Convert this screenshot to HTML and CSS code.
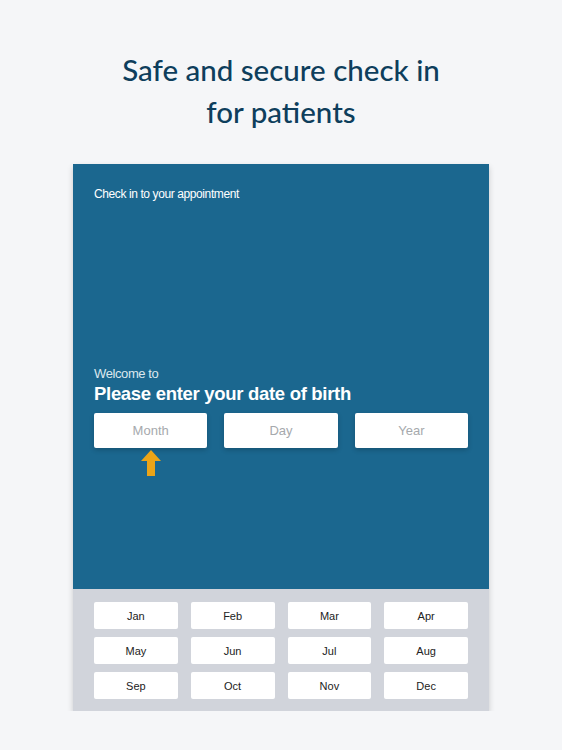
FILE: index.html
```html
<!DOCTYPE html>
<html lang="en">
<head>
  <meta charset="UTF-8" />
  <meta name="viewport" content="width=device-width, initial-scale=1.0" />
  <title>Safe and secure check in</title>
  <link rel="stylesheet" href="styles.css">
</head>
<body>
  <header class="hero">
    <h1>Safe and secure check in<br>for patients</h1>
  </header>

  <div class="device">
    <!-- Check in screen -->
    <div class="screen">
      <p class="screen-title">Check in to your appointment</p>

      <div class="dob">
        <p class="welcome">Welcome to</p>
        <h2>Please enter your date of birth</h2>
        <div class="fields">
          <div class="field">Month</div>
          <div class="field">Day</div>
          <div class="field">Year</div>
        </div>
        <div class="fields">
          <div class="pointer">
            <svg width="20" height="26" viewBox="0 0 20 26">
              <path d="M10 0 L20 11 L14 11 L14 26 L6 26 L6 11 L0 11 Z" fill="#eba417" />
            </svg>
          </div>
        </div>
      </div>
    </div>

    <!-- Month picker -->
    <div class="picker">
      <button>Jan</button>
      <button>Feb</button>
      <button>Mar</button>
      <button>Apr</button>
      <button>May</button>
      <button>Jun</button>
      <button>Jul</button>
      <button>Aug</button>
      <button>Sep</button>
      <button>Oct</button>
      <button>Nov</button>
      <button>Dec</button>
    </div>
  </div>
</body>
</html>
```

FILE: styles.css
```css
* {
  box-sizing: border-box;
}

body {
  margin: 0;
  background: #f5f6f8;
  font-family: "Liberation Sans", Arial, sans-serif;
}

.hero {
  padding-top: 49px;
  height: 164px;
  text-align: center;
}

.hero h1 {
  margin: 0;
  font-family: Lato, "Open Sans", sans-serif;
  font-weight: 500;
  font-size: 29.5px;
  line-height: 42px;
  color: #0e3e5c;
}

.device {
  width: 416px;
  margin: 0 auto;
  box-shadow: 0 3px 6px rgba(0, 0, 0, 0.18);
}

.screen {
  height: 425px;
  padding: 22px 21px 0;
  background: #1b678f;
  color: #fff;
}

.screen-title {
  margin: 0;
  font-size: 12px;
  line-height: 16px;
  letter-spacing: -0.4px;
}

.dob {
  margin-top: 164px;
}

.welcome {
  margin: 0;
  font-size: 13px;
  line-height: 16px;
  font-weight: 300;
  letter-spacing: -0.4px;
  color: #dbe7ee;
}

.dob h2 {
  margin: 0 0 7px;
  font-size: 18.5px;
  line-height: 24px;
  letter-spacing: -0.3px;
}

.fields {
  display: grid;
  grid-template-columns: repeat(3, 1fr);
  gap: 17px;
}

.field {
  height: 35px;
  background: #fff;
  border-radius: 2px;
  box-shadow: 0 2px 5px rgba(0, 0, 0, 0.2);
  color: #a6a9ad;
  font-size: 13px;
  line-height: 35px;
  text-align: center;
}

.pointer {
  padding-top: 2px;
  text-align: center;
}

.picker {
  display: grid;
  grid-template-columns: repeat(4, 1fr);
  gap: 8px 13px;
  padding: 13px 21px 12px;
  background: #d1d4db;
}

.picker button {
  height: 27px;
  border: none;
  border-radius: 2px;
  background: #fff;
  color: #222;
  font-family: "Liberation Sans", Arial, sans-serif;
  font-size: 11px;
  padding: 0;
}
```
